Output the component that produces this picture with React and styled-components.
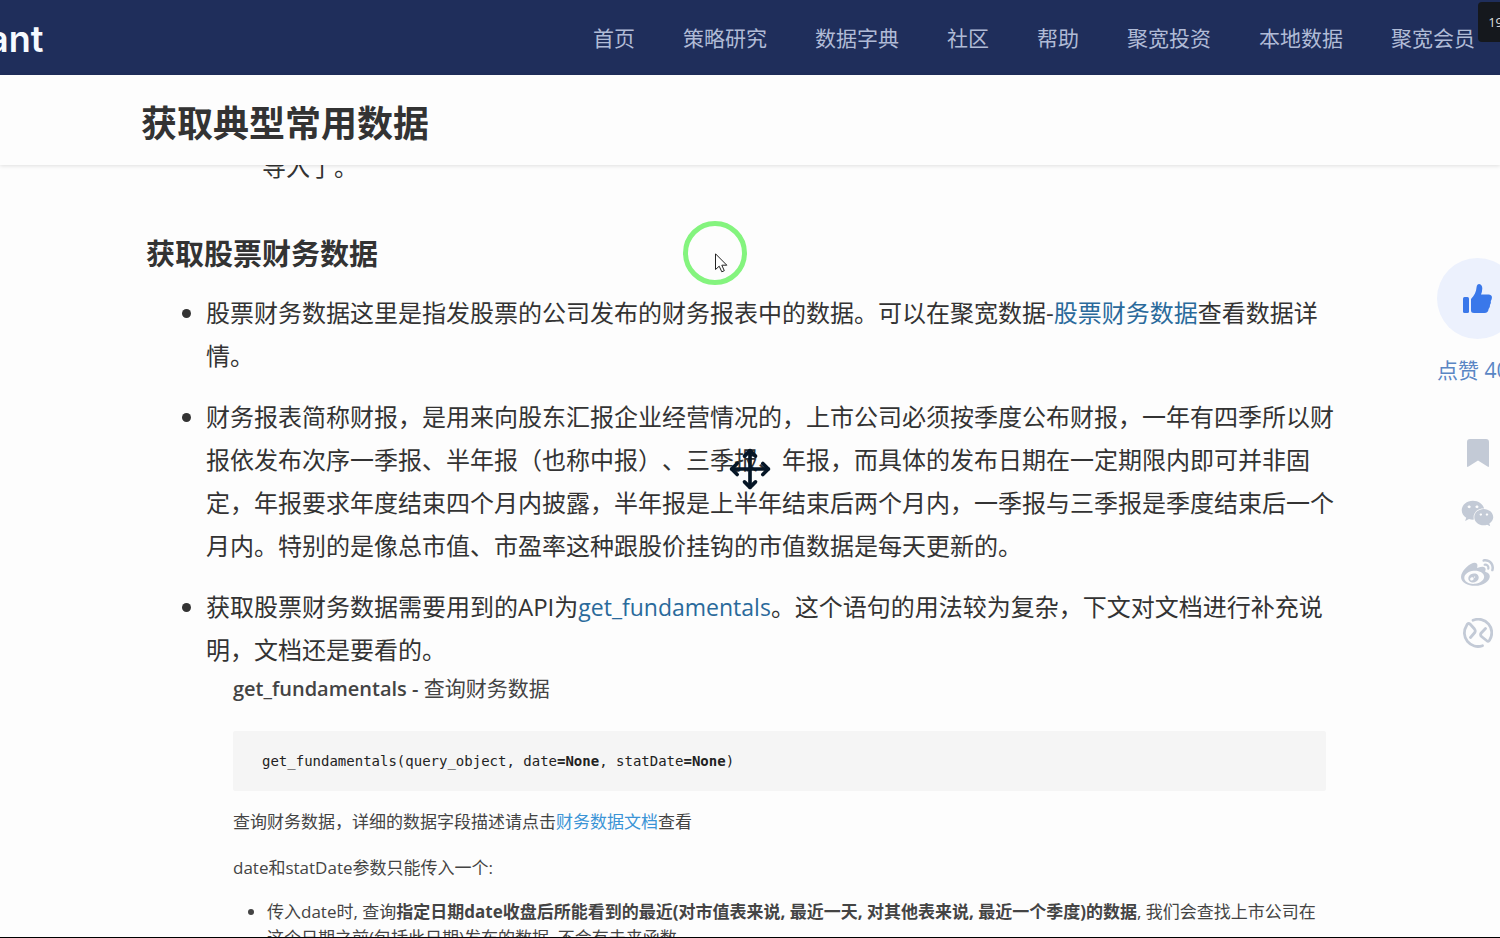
import styled, { createGlobalStyle } from "styled-components";
import { FaWeibo, FaWeixin } from "react-icons/fa";
import { Move } from "lucide-react";

const menu = ["首页", "策略研究", "数据字典", "社区", "帮助", "聚宽投资", "本地数据", "聚宽会员"];

export default function App() {
    return (
        <>
            <GlobalStyle />
            <Page>
                <TopBar>
                    <Logo href="#">ant</Logo>
                    <Menu>
                        {menu.map((item) => (
                            <a href="#" key={item}>{item}</a>
                        ))}
                    </Menu>
                </TopBar>

                <TitleBar>
                    <h1>获取典型常用数据</h1>
                </TitleBar>

                <Article>
                    <Previous>导入了。</Previous>
                    <h2>获取股票财务数据</h2>
                    <List>
                        <li>
                            股票财务数据这里是指发股票的公司发布的财务报表中的数据。可以在聚宽数据-<a href="#">股票财务数据</a>查看数据详情。
                        </li>
                        <li>
                            财务报表简称财报，是用来向股东汇报企业经营情况的，上市公司必须按季度公布财报，一年有四季所以财报依发布次序一季报、半年报（也称中报）、三季报、年报，而具体的发布日期在一定期限内即可并非固定，年报要求年度结束四个月内披露，半年报是上半年结束后两个月内，一季报与三季报是季度结束后一个月内。特别的是像总市值、市盈率这种跟股价挂钩的市值数据是每天更新的。
                        </li>
                        <li>
                            获取股票财务数据需要用到的API为<ApiLink href="#">get_fundamentals</ApiLink>。这个语句的用法较为复杂，下文对文档进行补充说明，文档还是要看的。
                            <Docs />
                        </li>
                    </List>
                </Article>

                <SideBar />

                <ClickRing>
                    <Pointer />
                </ClickRing>
                <MoveCursor>
                    <Move size={44} strokeWidth={2} />
                </MoveCursor>
                <Counter>19</Counter>
            </Page>
        </>
    );
}

function Docs() {
    return (
        <DocsWrapper>
            <h3>get_fundamentals - <span>查询财务数据</span></h3>
            <pre>
                get_fundamentals(query_object, date<b>=None</b>, statDate<b>=None</b>)
            </pre>
            <p>查询财务数据，详细的数据字段描述请点击<a href="#">财务数据文档</a>查看</p>
            <p>date和statDate参数只能传入一个:</p>
            <ul>
                <li>
                    传入date时, 查询<b>指定日期date收盘后所能看到的最近(对市值表来说, 最近一天, 对其他表来说, 最近一个季度)的数据</b>, 我们会查找上市公司在这个日期之前(包括此日期)发布的数据, 不会有未来函数.
                </li>
            </ul>
        </DocsWrapper>
    );
}

function SideBar() {
    return (
        <SideWrapper>
            <LikeButton aria-label="点赞">
                <svg width="30" height="30" viewBox="0 0 30 30" fill="currentColor">
                    <rect x="0" y="13" width="6" height="16" rx="1.5" />
                    <path d="M8 15C11.500 11.500 13.200 8 13.600 3Q14 0 16.200 0Q19.300 .6 19.300 4.500Q19.200 7.500 18 10.500H26Q29.400 11 28.900 14Q28.600 16 27.800 17Q28.400 19.500 27 21Q27.200 23.500 25.600 25Q25.200 29 21.500 29H11Q8 29 8 26.500Z" />
                </svg>
            </LikeButton>
            <LikeCount>点赞 40</LikeCount>
            <Shares>
                <button aria-label="收藏">
                    <svg width="22" height="28" viewBox="0 0 22 28" fill="currentColor">
                        <path d="M3 0H19Q22 0 22 3V27Q22 28.500 20.500 27.500L11 21.500L1.500 27.500Q0 28.500 0 27V3Q0 0 3 0Z" />
                    </svg>
                </button>
                <button aria-label="微信"><FaWeixin size={33} /></button>
                <button aria-label="微博"><FaWeibo size={33} /></button>
                <button aria-label="雪球">
                    <svg width="30" height="30" viewBox="0 0 30 30" fill="none" stroke="currentColor" strokeWidth="2.800" strokeLinecap="round" strokeLinejoin="round">
                        <path d="M10 2.300A13.500 13.500 0 0 1 26.500 22.200Q25 24.500 23.500 22.500L18.500 18.500Q17 17 18 15.300L22.500 10.500" />
                        <path d="M19.500 27.700A13.500 13.500 0 0 1 3.500 7.800Q5 4 7 6L11.500 11Q12.800 12.700 11.800 14.500L7.500 19.500" />
                    </svg>
                </button>
            </Shares>
        </SideWrapper>
    );
}

function Pointer() {
    return (
        <svg width="13" height="20" viewBox="0 0 13 20">
            <path d="M.5 .8V16.500L4.200 13.200L6.800 18.800L9.300 17.700L6.800 12.200H11.800Z" fill="#fff" stroke="#222" />
        </svg>
    );
}

const GlobalStyle = createGlobalStyle`
* {
    box-sizing: border-box;
}
body {
    margin: 0;
    background-color: #fdfdfd;
    color: #333;
    font-family: "Open Sans", "Noto Sans CJK SC", sans-serif;
    text-spacing-trim: space-all;
}
a {
    color: #2a6a9b;
    text-decoration: none;
}
button {
    padding: 0;
    border: none;
    background: none;
    cursor: pointer;
}
svg {
    display: block;
}
`;

const Page = styled.div`
position: relative;
height: 100vh;
overflow: hidden;
border-bottom: 1px solid #000;
`;
const TopBar = styled.header`
height: 75px;
padding: 0 25px 2px 0;
background-color: #1f2e5b;

display: flex;
justify-content: space-between;
align-items: center;
`;
const Logo = styled.a`
margin: 4px 0 0 -12px;
color: #f6faff;
font-family: Inter, sans-serif;
font-size: 36px;
font-weight: 600;
`;
const Menu = styled.nav`
display: flex;
gap: 48px;

a {
    color: #b0bbd6;
    font-size: 21px;
    white-space: nowrap;
}
`;
const TitleBar = styled.div`
position: relative;
z-index: 1;
height: 90px;
background-color: #fdfdfd;
box-shadow: 0 1px 4px rgba(0, 0, 0, 0.12);

display: flex;
align-items: center;

h1 {
    width: 100%;
    max-width: 1218px;
    margin: 0 auto;
    padding-top: 8px;
    font-size: 36px;
    line-height: 48px;
    font-weight: 700;
}
`;
const Article = styled.main`
max-width: 1208px;
margin: -20px auto 0;
font-size: 24px;
line-height: 43px;

h2 {
    margin: 44px 0 15px;
    font-size: 29px;
    line-height: 44px;
    font-weight: 700;
}
`;
const Previous = styled.p`
margin: 0;
padding-left: 116px;
`;
const List = styled.ul`
margin: 0;
padding-left: 60px;

> li + li {
    margin-top: 18px;
}
`;
const ApiLink = styled.a`
font-size: 23px;
line-height: 1;
`;
const DocsWrapper = styled.section`
padding: 1px 28px 0 27px;
color: #444;
font-size: 17px;
line-height: 30px;

h3 {
    margin: 0 0 25px;
    font-size: 20px;
    line-height: 34px;
    font-weight: 600;
}
h3 span {
    font-size: 21px;
    line-height: 1;
    font-weight: 400;
}
pre {
    margin: 0;
    padding: 1px 29px 0;
    border-radius: 2px;
    background-color: #f5f5f5;
    color: #222;
    font-family: "DejaVu Sans Mono", monospace;
    font-size: 14px;
    line-height: 59px;
    white-space: normal;
}
p {
    margin: 16px 0;
}
a {
    color: #3a94d6;
}
ul {
    margin: 0;
    padding-left: 34px;
    line-height: 26px;
    list-style: disc;
}
`;
const SideWrapper = styled.aside`
position: absolute;
top: 258px;
right: -18px;
width: 81px;

display: flex;
flex-direction: column;
align-items: center;
`;
const LikeButton = styled.button`
width: 81px;
height: 81px;
border-radius: 50%;
background-color: #ecf1fd;
color: #3a78ea;

display: flex;
justify-content: center;
align-items: center;
`;
const LikeCount = styled.span`
width: 100%;
margin-top: 16px;
color: #5a86c4;
font-size: 21px;
line-height: 30px;
white-space: nowrap;
`;
const Shares = styled.div`
margin-top: 38px;
color: #c3cad6;

display: flex;
flex-direction: column;
align-items: center;

button {
    height: 60px;
    color: inherit;
}
`;
const ClickRing = styled.div`
position: absolute;
top: 221px;
left: 683px;
width: 64px;
height: 64px;
border: 5px solid #84f47e;
border-radius: 50%;

svg {
    margin: 27px 0 0 27px;
}
`;
const MoveCursor = styled.div`
position: absolute;
top: 50%;
left: 50%;
transform: translate(-50%, -50%);
color: #061626;
`;
const Counter = styled.div`
position: absolute;
top: 2px;
right: -13px;
z-index: 2;
padding: 0 10px;
border-radius: 4px;
background-color: #15181d;
color: #ddd;
font-size: 13px;
line-height: 40px;
`;
